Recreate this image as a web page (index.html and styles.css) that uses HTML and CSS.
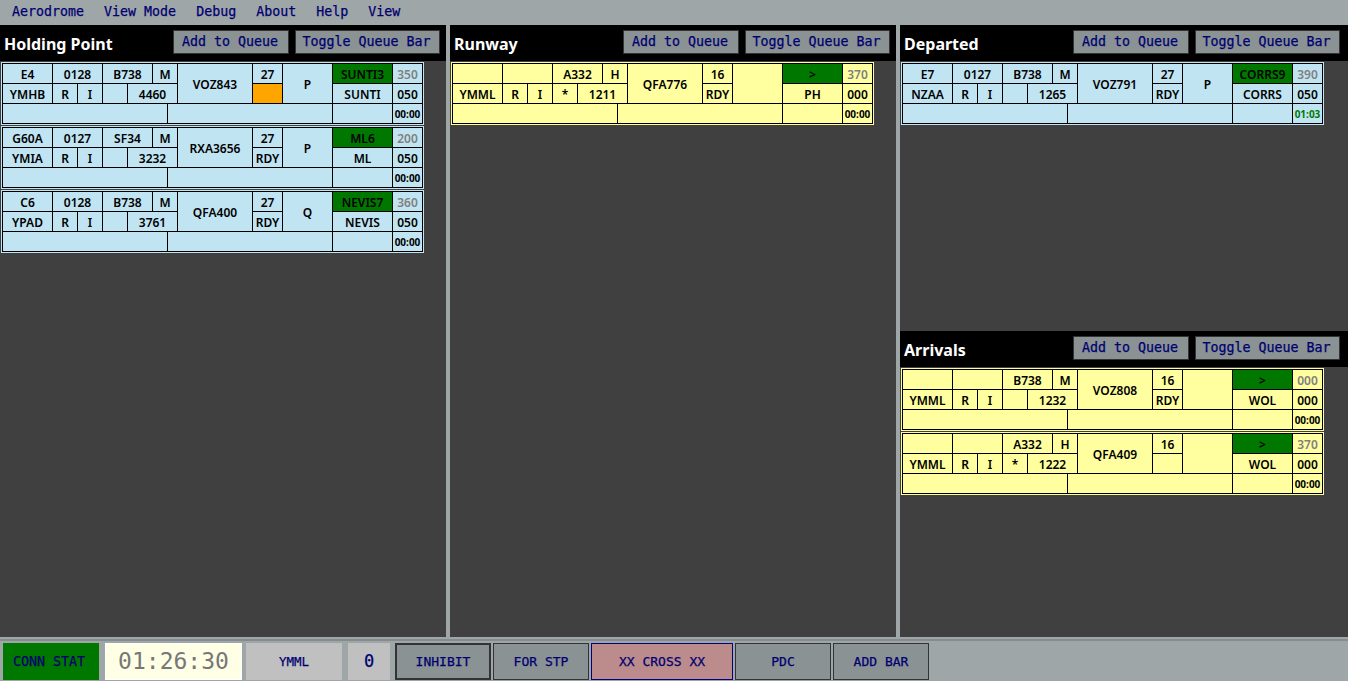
FILE: index.html
```html
<!DOCTYPE html>
<html lang="en">
<head>
  <meta charset="UTF-8">
  <title>Aerodrome</title>
  <link rel="stylesheet" href="styles.css">
</head>
<body>

  <nav class="menu">
    <span>Aerodrome</span>
    <span>View Mode</span>
    <span>Debug</span>
    <span>About</span>
    <span>Help</span>
    <span>View</span>
  </nav>

  <main class="bays">

    <section class="bay">
      <header class="bay-head">
        <h2>Holding Point</h2>
        <button>Add to Queue</button>
        <button>Toggle Queue Bar</button>
      </header>

      <div class="strip blue">
        <div>E4</div><div class="span2">0128</div><div class="span2">B738</div><div class="span2">M</div>
        <div class="tall">VOZ843</div><div>27</div><div class="tall">P</div>
        <div class="sid">SUNTI3</div><div class="alt">350</div>
        <div>YMHB</div><div>R</div><div>I</div><div></div><div class="span3">4460</div>
        <div class="orange"></div><div>SUNTI</div><div>050</div>
        <div class="span6"></div><div class="span4"></div><div></div><div class="time">00:00</div>
      </div>

      <div class="strip blue">
        <div>G60A</div><div class="span2">0127</div><div class="span2">SF34</div><div class="span2">M</div>
        <div class="tall">RXA3656</div><div>27</div><div class="tall">P</div>
        <div class="sid">ML6</div><div class="alt">200</div>
        <div>YMIA</div><div>R</div><div>I</div><div></div><div class="span3">3232</div>
        <div>RDY</div><div>ML</div><div>050</div>
        <div class="span6"></div><div class="span4"></div><div></div><div class="time">00:00</div>
      </div>

      <div class="strip blue">
        <div>C6</div><div class="span2">0128</div><div class="span2">B738</div><div class="span2">M</div>
        <div class="tall">QFA400</div><div>27</div><div class="tall">Q</div>
        <div class="sid">NEVIS7</div><div class="alt">360</div>
        <div>YPAD</div><div>R</div><div>I</div><div></div><div class="span3">3761</div>
        <div>RDY</div><div>NEVIS</div><div>050</div>
        <div class="span6"></div><div class="span4"></div><div></div><div class="time">00:00</div>
      </div>
    </section>

    <section class="bay">
      <header class="bay-head">
        <h2>Runway</h2>
        <button>Add to Queue</button>
        <button>Toggle Queue Bar</button>
      </header>

      <div class="strip yellow">
        <div></div><div class="span2"></div><div class="span2">A332</div><div class="span2">H</div>
        <div class="tall">QFA776</div><div>16</div><div class="tall"></div>
        <div class="sid">&gt;</div><div class="alt">370</div>
        <div>YMML</div><div>R</div><div>I</div><div>*</div><div class="span3">1211</div>
        <div>RDY</div><div>PH</div><div>000</div>
        <div class="span6"></div><div class="span4"></div><div></div><div class="time">00:00</div>
      </div>
    </section>

    <div class="bay-stack">
      <section class="bay">
        <header class="bay-head">
          <h2>Departed</h2>
          <button>Add to Queue</button>
          <button>Toggle Queue Bar</button>
        </header>

        <div class="strip blue">
          <div>E7</div><div class="span2">0127</div><div class="span2">B738</div><div class="span2">M</div>
          <div class="tall">VOZ791</div><div>27</div><div class="tall">P</div>
          <div class="sid">CORRS9</div><div class="alt">390</div>
          <div>NZAA</div><div>R</div><div>I</div><div></div><div class="span3">1265</div>
          <div>RDY</div><div>CORRS</div><div>050</div>
          <div class="span6"></div><div class="span4"></div><div></div><div class="time gone">01:03</div>
        </div>
      </section>

      <section class="bay">
        <header class="bay-head">
          <h2>Arrivals</h2>
          <button>Add to Queue</button>
          <button>Toggle Queue Bar</button>
        </header>

        <div class="strip yellow">
          <div></div><div class="span2"></div><div class="span2">B738</div><div class="span2">M</div>
          <div class="tall">VOZ808</div><div>16</div><div class="tall"></div>
          <div class="sid">&gt;</div><div class="alt">000</div>
          <div>YMML</div><div>R</div><div>I</div><div></div><div class="span3">1232</div>
          <div>RDY</div><div>WOL</div><div>000</div>
          <div class="span6"></div><div class="span4"></div><div></div><div class="time">00:00</div>
        </div>

        <div class="strip yellow">
          <div></div><div class="span2"></div><div class="span2">A332</div><div class="span2">H</div>
          <div class="tall">QFA409</div><div>16</div><div class="tall"></div>
          <div class="sid">&gt;</div><div class="alt">370</div>
          <div>YMML</div><div>R</div><div>I</div><div>*</div><div class="span3">1222</div>
          <div></div><div>WOL</div><div>000</div>
          <div class="span6"></div><div class="span4"></div><div></div><div class="time">00:00</div>
        </div>
      </section>
    </div>

  </main>

  <footer class="status">
    <div class="conn">CONN STAT</div>
    <div class="clock">01:26:30</div>
    <div class="field">YMML</div>
    <div class="count">0</div>
    <button class="inhibit">INHIBIT</button>
    <button>FOR STP</button>
    <button class="cross">XX CROSS XX</button>
    <button>PDC</button>
    <button>ADD BAR</button>
  </footer>

</body>
</html>
```

FILE: styles.css
```css
html, body {
  height: 100%;
  margin: 0;
  padding: 0;
  overflow: hidden;
}
body {
  display: flex;
  flex-direction: column;
  background-color: #9fa6a7;
  color: #000070;
  font-family: "DejaVu Sans Mono", "Liberation Mono", monospace;
  font-size: 13.3px;
  -webkit-text-stroke: 0.25px;
}
button {
  font-family: inherit;
  font-size: inherit;
  color: inherit;
  margin: 0;
  padding: 0;
  background-color: #8a9293;
  border: 1px solid #333;
  border-radius: 0;
  -webkit-text-stroke: inherit;
}

/* top menu */
.menu {
  height: 25px;
  flex: none;
  display: flex;
  gap: 20px;
  padding-left: 12px;
  line-height: 23px;
}

/* the three columns of bays */
.bays {
  height: 612px;
  flex: none;
  display: grid;
  grid-template-columns: 446px 446px 448px;
  gap: 4px;
}
.bay {
  background-color: #404040;
  min-height: 0;
}
.bay-stack {
  display: grid;
  grid-template-rows: 306px 306px;
}
.bay-head {
  height: 36px;
  margin-bottom: 1px;
  box-sizing: border-box;
  padding: 5px 6px 0 4px;
  display: flex;
  gap: 6px;
  align-items: flex-start;
  background-color: #000;
}
.bay-stack .bay-head {
  padding-right: 8px;
}
.bay-head h2 {
  flex: 1;
  margin: 0;
  padding-top: 3px;
  color: #fff;
  font-family: "Noto Sans", sans-serif;
  font-size: 16px;
  line-height: 22px;
  font-weight: 700;
  -webkit-text-stroke: 0;
}
.bay-head button {
  width: 116px;
  height: 24px;
  padding: 0 2px 1px 0;
}
.bay-head button:last-child {
  width: 145px;
}

/* flight strips */
.strip {
  width: 419px;
  margin: 0 0 1px 1px;
  border: 1px solid var(--cell);
  padding: 1px;
  display: grid;
  grid-template-columns: 49px 24px 24px 24px 24px 14px 9px 74px 29px 49px 59px 29px;
  grid-auto-rows: 19px;
  gap: 1px;
  background-color: #000;
  color: #000;
  font-family: "Noto Sans", sans-serif;
  font-size: 12px;
  font-weight: 600;
  -webkit-text-stroke: 0;
}
.strip.blue {
  --cell: #c0e4f2;
}
.strip.yellow {
  --cell: #ffff9f;
}
.strip > div {
  background-color: var(--cell);
  text-align: center;
  line-height: 21px;
  overflow: hidden;
  white-space: nowrap;
}
.strip .span2 { grid-column: span 2; }
.strip .span3 { grid-column: span 3; }
.strip .span4 { grid-column: span 4; }
.strip .span6 { grid-column: span 6; }
.strip .tall {
  grid-row: span 2;
  line-height: 42px;
}
.strip .sid { background-color: #007800; }
.strip .alt { color: #808080; }
.strip .orange { background-color: #ffa500; }
.strip .time {
  font-size: 10px;
  font-weight: 700;
}
.strip .gone { color: #007800; }

/* bottom bar */
.status {
  flex: 1;
  box-sizing: border-box;
  margin-top: 2px;
  padding: 2px 0 1px 3px;
  border-top: 2px solid #868c8d;
  display: flex;
  gap: 2px;
  font-size: 13px;
}
.status > * {
  width: 96px;
  box-sizing: border-box;
  text-align: center;
}
.conn {
  background-color: #007800;
  line-height: 37px;
  margin-right: 4px;
  padding-right: 4px;
  font-size: 13.3px;
}
.clock {
  width: 137px;
  background-color: #ffffe6;
  border: 1px solid #fff;
  color: #777;
  font-size: 23px;
  line-height: 34px;
  margin-right: 2px;
  -webkit-text-stroke: 0;
}
.field {
  background-color: #c0c0c0;
  line-height: 37px;
  margin-right: 4px;
  font-size: 12.5px;
}
.count {
  width: 42px;
  background-color: #c0c0c0;
  font-size: 17px;
  line-height: 37px;
  margin-right: 3px;
}
.status .inhibit {
  border: 2px solid #333;
}
.status .cross {
  width: 142px;
  background-color: #bc8c8c;
  border-color: #000080;
}
```
